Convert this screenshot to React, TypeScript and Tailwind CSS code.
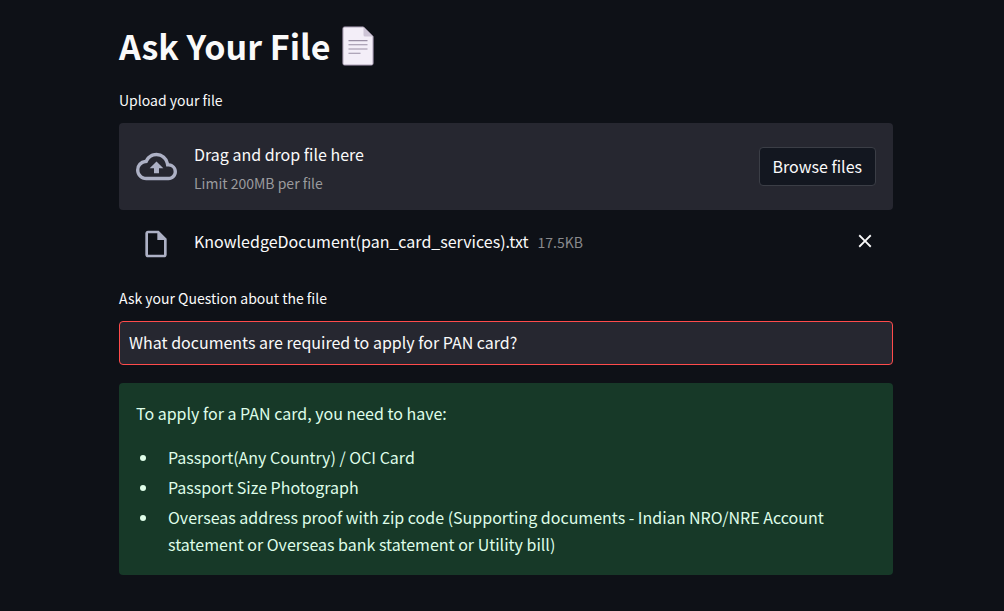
import { useState } from "react";
import { MdClose, MdOutlineCloudUpload, MdOutlineInsertDriveFile } from "react-icons/md";

function DocumentIcon() {
  return (
    <svg viewBox="0 0 32 40" className="h-10 w-8 shrink-0" aria-hidden="true">
      <path
        d="M2.5 .9H21.5L31.1 10.5V37.5a1.6 1.6 0 0 1-1.6 1.6H2.5A1.6 1.6 0 0 1 .9 37.5V2.5A1.6 1.6 0 0 1 2.5 .9Z"
        fill="#f3eef8"
        stroke="#998ea4"
        strokeWidth="1"
      />
      <path d="M21.5 .9L31.1 10.5H23a1.5 1.5 0 0 1-1.5-1.5Z" fill="#cdc4d6" />
      <path d="M6.5 14.6H25.5M6.5 18.8H25.5M6.5 23H25.5M6.5 27.2H18.5" stroke="#998ea4" strokeWidth="1.1" />
    </svg>
  );
}

const requirements = [
  "Passport(Any Country) / OCI Card",
  "Passport Size Photograph",
  "Overseas address proof with zip code (Supporting documents - Indian NRO/NRE Account statement or Overseas bank statement or Utility bill)",
];

export default function App() {
  const [question, setQuestion] = useState("What documents are required to apply for PAN card?");

  return (
    <main className="min-h-screen bg-[#0e1117] pt-[22px] pr-[111px] pb-9 pl-[119px] font-['Noto_Sans_CJK_SC',sans-serif] text-base text-[#fafafa]">
      <h1 className="flex items-center gap-3 text-[34px] leading-[48px] font-bold">
        Ask Your File
        <DocumentIcon />
      </h1>

      <p id="upload-label" className="mt-[18px] text-sm leading-6">
        Upload your file
      </p>
      <section
        aria-labelledby="upload-label"
        className="mt-[11px] flex items-center rounded bg-[#262730] px-[17px] py-[14px]"
      >
        <MdOutlineCloudUpload className="mr-[17px] size-[41px] shrink-0 text-[#adb1c5]" />
        <div className="flex-1">
          <p className="leading-[34px]">Drag and drop file here</p>
          <p className="text-sm leading-[25px] text-[#9a9a9d]">Limit 200MB per file</p>
        </div>
        <button
          type="button"
          className="h-[39px] rounded border border-[#3b3e46] bg-[#131720] px-[13px] pb-[2px] leading-7"
        >
          Browse files
        </button>
      </section>

      <div className="mt-4 flex h-9 items-center pr-[17px] pl-[21px]">
        <MdOutlineInsertDriveFile className="mr-[22px] size-8 shrink-0 text-[#adb1c5]" />
        <p className="flex-1 pb-[6px] leading-7">
          KnowledgeDocument(pan_card_services).txt
          <span className="ml-[9px] text-sm text-[#88898c]">17.5KB</span>
        </p>
        <button type="button" aria-label="Remove file" className="pb-[6px]">
          <MdClose className="size-[22px]" />
        </button>
      </div>

      <label htmlFor="question" className="mt-6 block text-sm leading-6">
        Ask your Question about the file
      </label>
      <input
        id="question"
        type="text"
        value={question}
        onChange={(event) => setQuestion(event.target.value)}
        className="mt-[11px] block h-11 w-full rounded border border-[#ff4b4b] bg-[#262730] px-[9px] pb-[2px] outline-none"
      />

      <section className="mt-[18px] rounded bg-[#173928] p-[17px] leading-[27px] text-[#dffde9]">
        <p>To apply for a PAN card, you need to have:</p>
        <ul className="mt-[17px] list-disc space-y-[3px] pl-[23px]">
          {requirements.map((item) => (
            <li key={item} className="pl-[9px]">
              {item}
            </li>
          ))}
        </ul>
      </section>
    </main>
  );
}
